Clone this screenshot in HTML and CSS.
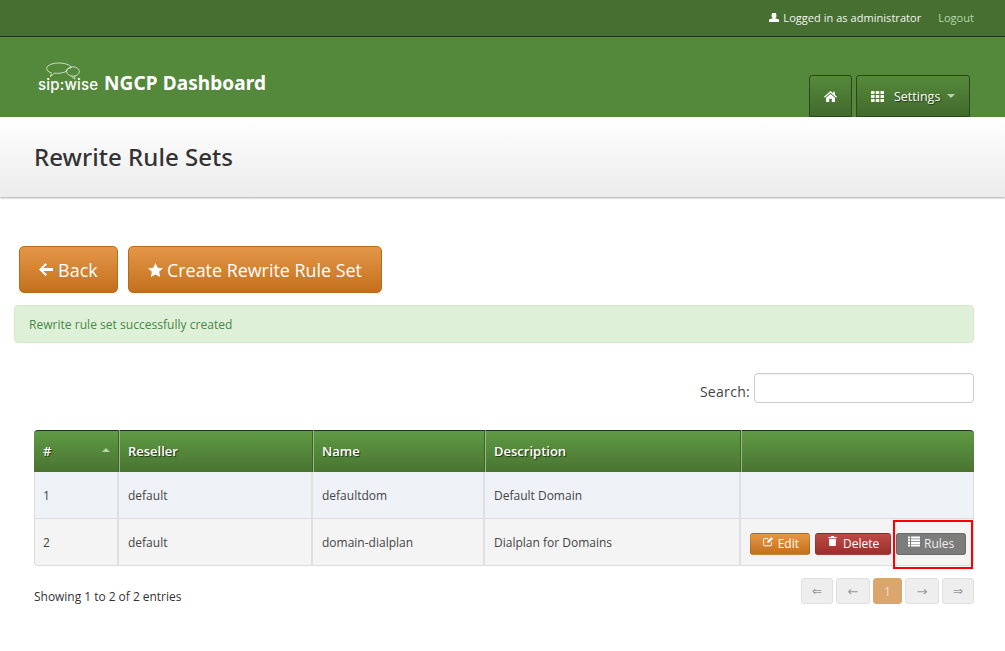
FILE: index.html
```html
<!DOCTYPE html>
<html lang="en">
<head>
<meta charset="utf-8">
<title>Rewrite Rule Sets</title>
<link rel="stylesheet" href="styles.css">
</head>
<body>
<div class="topbar">
  <svg class="ico-user" viewBox="0 0 10 9"><path d="M3 0H7L7.500 3.200 6.300 5.300 10 6.500V9H0V6.500L3.700 5.300 2.500 3.200Z"/></svg>
  <span class="who">Logged in as administrator</span>
  <a class="logout">Logout</a>
</div>
<header class="brandbar">
  <div class="brand">
    <div class="logo">
      <svg class="bubbles" viewBox="0 0 46 22" fill="none" stroke="#fff" stroke-width=".8">
        <path d="M2 7.500C2 3.500 9 1 16 1 23 1 30 3 31 6.500 27 6.800 25 8.800 25 11 21 12.800 16 13.500 11 13L6.500 17 7.500 12.500C4 11.500 2 9.800 2 7.500Z"/>
        <ellipse cx="33" cy="11" rx="7.500" ry="5.500"/>
        <path d="M31 16.500L35 20 35.500 16.300"/>
      </svg>
      <span class="logo-text">sip:wise</span>
    </div>
    <span class="brand-name">NGCP Dashboard</span>
  </div>
  <nav class="nav">
    <a class="nav-btn nav-home">
      <svg class="ico-home" viewBox="0 0 13 11"><path d="M6.500 0L9 2.200V.8H10.800V3.800L13 5.800 12.200 6.700 6.500 1.700.8 6.700 0 5.800ZM6.500 2.900L11 6.800V11H7.800V7.800H5.200V11H2V6.800Z"/></svg>
    </a>
    <a class="nav-btn nav-settings">
      <svg class="ico-grid" viewBox="0 0 13 11"><path d="M0 0h3.500v3H0zM4.750 0h3.500v3h-3.500zM9.500 0H13v3H9.500zM0 4h3.500v3H0zM4.750 4h3.500v3h-3.500zM9.500 4H13v3H9.500zM0 8h3.500v3H0zM4.750 8h3.500v3h-3.500zM9.500 8H13v3H9.500z"/></svg>
      <span>Settings</span>
      <i class="caret"></i>
    </a>
  </nav>
</header>
<section class="subhead"><h1>Rewrite Rule Sets</h1></section>
<main class="content">
  <div class="actions">
    <a class="btn-large btn-back">
      <svg class="ico-arrow" viewBox="0 0 14 13"><path d="M6.500 0L8 1.500 4.200 5.100H14V7.900H4.200L8 11.500 6.500 13 0 6.500Z"/></svg>
      <span>Back</span>
    </a>
    <a class="btn-large btn-create">
      <svg class="ico-star" viewBox="0 0 16 15"><path d="M8 0L10.400 5 16 5.700 11.900 9.500 13 15 8 12.300 3 15 4.100 9.500 0 5.700 5.600 5Z"/></svg>
      <span>Create Rewrite Rule Set</span>
    </a>
  </div>
  <div class="alert">Rewrite rule set successfully created</div>
  <div class="search">
    <label for="q">Search:</label>
    <input id="q" class="search-input" type="text">
  </div>
  <div class="table-wrap">
    <table class="grid">
      <colgroup>
        <col class="c1"><col class="c2"><col class="c3"><col class="c4"><col class="c5">
      </colgroup>
      <thead>
        <tr>
          <th class="sort">#<i class="sort-up"></i></th>
          <th>Reseller</th>
          <th>Name</th>
          <th>Description</th>
          <th></th>
        </tr>
      </thead>
      <tbody>
        <tr class="odd">
          <td>1</td><td>default</td><td>defaultdom</td><td>Default Domain</td><td></td>
        </tr>
        <tr class="even">
          <td>2</td><td>default</td><td>domain-dialplan</td><td>Dialplan for Domains</td>
          <td class="row-actions">
            <a class="btn-mini btn-edit">
              <svg class="ico-mini" viewBox="0 0 12 11" fill="none" stroke="#fff" stroke-width="1.100"><path d="M9.500 6.500V9.500Q9.500 10.300 8.700 10.300H1.500Q.7 10.300.7 9.500V3Q.7 2.200 1.500 2.200H6"/><path d="M4.500 7L5 5 9.500.8 11.200 2.500 6.700 6.800Z" fill="#fff" stroke="none"/></svg>
              Edit
            </a>
            <a class="btn-mini btn-delete">
              <svg class="ico-mini" viewBox="0 0 10 11" fill="#fff"><path d="M3.500 0H6.500L7 1H9.800V2.200H.2V1H3ZM1 3H9L8.500 11H1.500Z"/></svg>
              Delete
            </a>
            <a class="btn-mini btn-rules">
              <svg class="ico-mini ico-list" viewBox="0 0 12 10" fill="#fff"><path d="M0 0h2v2H0zM3 0h9v2H3zM0 2.700h2v2H0zM3 2.700h9v2H3zM0 5.400h2v2H0zM3 5.400h9v2H3zM0 8.100h2V10H0zM3 8.100h9V10H3z"/></svg>
              Rules
            </a>
          </td>
        </tr>
      </tbody>
    </table>
    <div class="highlight"></div>
  </div>
  <div class="foot">
    <div class="info">Showing 1 to 2 of 2 entries</div>
    <div class="pager">
      <a class="pg pg-a">⇐</a>
      <a class="pg pg-b">←</a>
      <a class="pg pg-cur">1</a>
      <a class="pg pg-b">→</a>
      <a class="pg pg-a">⇒</a>
    </div>
  </div>
</main>
</body>
</html>
```
FILE: styles.css
```css
* { box-sizing: border-box; }
html, body { margin: 0; padding: 0; }
body {
  width: 1005px;
  height: 651px;
  overflow: hidden;
  background: #fff;
  color: #333;
  font-family: "Open Sans", "Noto Sans", sans-serif;
  font-size: 12px;
}
a { text-decoration: none; }

.topbar {
  height: 37px;
  background: #476f32;
  border-bottom: 1px solid #1f2f14;
  display: flex;
  align-items: center;
  justify-content: flex-end;
  padding: 0 31px 1px 0;
  color: #fff;
  font-size: 11px;
}
.ico-user { width: 10px; height: 9px; fill: #fff; margin-right: 4px; }
.who { color: #f2f6ee; letter-spacing: .04px; }
.logout { color: #b6d8a8; margin-left: 17px; letter-spacing: .03px; }

.brandbar {
  height: 80px;
  background: #54893b;
  border-top: 1px solid #5b9040;
  display: flex;
  justify-content: space-between;
  padding: 0 35px 0 38px;
}
.brand { display: flex; align-items: flex-start; padding-top: 24px; }
.logo { position: relative; width: 60px; height: 32px; }
.bubbles { position: absolute; left: 7px; top: 0; width: 39px; height: 19px; }
.logo-text {
  position: absolute;
  left: 0;
  top: 14px;
  color: #fff;
  font-family: "Inter", sans-serif;
  font-weight: 500;
  font-size: 15px;
  line-height: 18px;
  letter-spacing: .2px;
  white-space: nowrap;
}
.brand-name {
  margin-left: 6px;
  margin-top: 8px;
  color: #fff;
  font-family: "Noto Sans", sans-serif;
  font-weight: 700;
  font-size: 19px;
  line-height: 26px;
  letter-spacing: .1px;
}
.nav { display: flex; align-items: flex-end; gap: 4px; }
.nav-btn {
  height: 42px;
  display: flex;
  align-items: center;
  color: #fff;
  background: linear-gradient(#558a3b, #426a2e);
  border: 1px solid #2a481b;
  border-bottom-width: 1px;
  border-radius: 3px 3px 0 0;
  font-size: 12.500px;
  text-shadow: 1px 1px 1px rgba(0,0,0,.5);
}
.nav-home { width: 43px; justify-content: center; }
.nav-settings { width: 114px; padding-left: 14px; }
.ico-home { width: 13px; height: 11px; fill: #fff; }
.ico-grid { width: 13px; height: 11px; fill: #fff; margin-right: 10px; }
.caret {
  margin-left: 7px;
  border-left: 4px solid transparent;
  border-right: 4px solid transparent;
  border-top: 4px solid #b8cfad;
}

.subhead {
  height: 80px;
  background: linear-gradient(#fff, #ececec);
  box-shadow: 0 1px 2px rgba(0,0,0,.35);
  padding: 0 34px;
  display: flex;
  align-items: center;
}
.subhead h1 {
  margin: 0;
  color: #333;
  font-family: "Noto Sans", sans-serif;
  font-weight: 500;
  font-size: 24px;
  line-height: 80px;
  letter-spacing: .05px;
}

.content { padding: 49px 31px 0 14px; }
.actions { display: flex; gap: 10px; padding-left: 5px; }
.btn-large {
  height: 47px;
  padding: 0 19px;
  display: flex;
  align-items: center;
  gap: 5px;
  color: #fff;
  font-size: 17.900px;
  background: linear-gradient(#e49748, #c3701d);
  border: 1px solid #b96a1c;
  border-radius: 5px;
}
.btn-back { width: 99px; gap: 5px; letter-spacing: .1px; }
.btn-create { width: 254px; gap: 4px; }
.ico-arrow { width: 14px; height: 13px; fill: #fff; }
.ico-star { width: 15px; height: 14px; fill: #fff; }

.alert {
  margin-top: 12px;
  height: 38px;
  line-height: 37px;
  padding-left: 14px;
  background: #dff0d8;
  border: 1px solid #d6e9c6;
  border-radius: 4px;
  color: #468847;
  letter-spacing: .03px;
}

.search {
  margin-top: 30px;
  height: 30px;
  display: flex;
  justify-content: flex-end;
  align-items: center;
  gap: 4px;
  font-size: 14px;
  color: #444;
}
.search label { padding-top: 6px; letter-spacing: .3px; }
.search-input {
  width: 220px;
  height: 30px;
  border: 1px solid #ccc;
  border-radius: 4px;
  background: #fff;
  box-shadow: inset 0 1px 1px rgba(0,0,0,.05);
}

.table-wrap { position: relative; margin: 27px 0 0 20px; }
.grid {
  width: 940px;
  table-layout: fixed;
  border-collapse: separate;
  border-spacing: 0;
  font-size: 12px;
}
.c1 { width: 85px; }
.c2 { width: 194px; }
.c3 { width: 172px; }
.c4 { width: 256px; }
.c5 { width: 233px; }
.grid th {
  height: 42px;
  padding: 0 8px 1px;
  text-align: left;
  font-weight: 600;
  font-size: 13px;
  color: #fff;
  text-shadow: 1px 1px 1px rgba(0,0,0,.6);
  background: linear-gradient(#5f9a44, #497431);
  border-top: 1px solid #22331c;
  border-left: 1px solid #99bb88;
  border-right: 1px solid #3f6129;
}
.grid th:first-child { border-left: 0; border-top-left-radius: 4px; padding-left: 9px; }
.grid th:last-child { border-right: 0; border-top-right-radius: 4px; }
.sort { position: relative; }
.sort-up {
  position: absolute;
  right: 8px;
  top: 17px;
  border-left: 4px solid transparent;
  border-right: 4px solid transparent;
  border-bottom: 4px solid #b9d0ae;
}
.grid td {
  height: 47px;
  padding: 0 9px;
  border-bottom: 1px solid #dcdcdc;
  border-right: 2px solid #e0e0e0;
  color: #444;
}
.grid td:first-child { border-left: 1px solid #dcdcdc; padding-left: 8px; }
.grid td:last-child { border-right: 1px solid #dcdcdc; }
.odd td { background: #eff3f8; }
.even td { background: #f4f4f4; }
.even td:first-child { border-bottom-left-radius: 4px; }
.even td:last-child { border-bottom-right-radius: 4px; }
.grid td.row-actions { padding: 0 0 0 9px; white-space: nowrap; font-size: 0; }
.btn-mini {
  display: inline-flex;
  align-items: center;
  height: 22px;
  margin-top: 3px;
  margin-right: 5px;
  padding: 0 10px 0 12px;
  vertical-align: middle;
  border-radius: 3px;
  font-size: 12px;
  color: #fff;
  border: 1px solid rgba(0,0,0,.12);
}
.ico-mini { width: 12px; height: 11px; margin: -5px 4px 0 0; }
.btn-edit { width: 60px; background: linear-gradient(#e49748, #c3701d); }
.btn-delete { width: 76px; padding-right: 0; background: linear-gradient(#bd4a46, #9c2f2b); }
.btn-rules { width: 70px; padding-left: 11px; background: #7c7c7c; margin-right: 0; color: #eee; }
.btn-delete .ico-mini { width: 9px; height: 10px; margin-right: 6px; }

.highlight {
  position: absolute;
  left: 859px;
  top: 90px;
  width: 80px;
  height: 49px;
  border: 2px solid #f00;
  pointer-events: none;
}

.foot {
  margin: 12px 0 0 20px;
  display: flex;
  justify-content: space-between;
  align-items: flex-start;
}
.info { padding-top: 10px; color: #333; letter-spacing: -.03px; }
.pager { display: flex; gap: 3px; }
.pg {
  height: 26px;
  display: flex;
  align-items: center;
  justify-content: center;
  background: #eee;
  border: 1px solid #e0e0e0;
  border-radius: 3px;
  color: #999;
  font-family: "DejaVu Sans", sans-serif;
  font-size: 13px;
}
.pg-a { width: 32px; font-size: 12px; }
.pg-b { width: 34px; }
.pg-cur {
  width: 29px;
  background: #dba66d;
  border-color: #dba66d;
  color: #f3ddc3;
  font-family: "Open Sans", sans-serif;
  font-size: 12px;
}
```
